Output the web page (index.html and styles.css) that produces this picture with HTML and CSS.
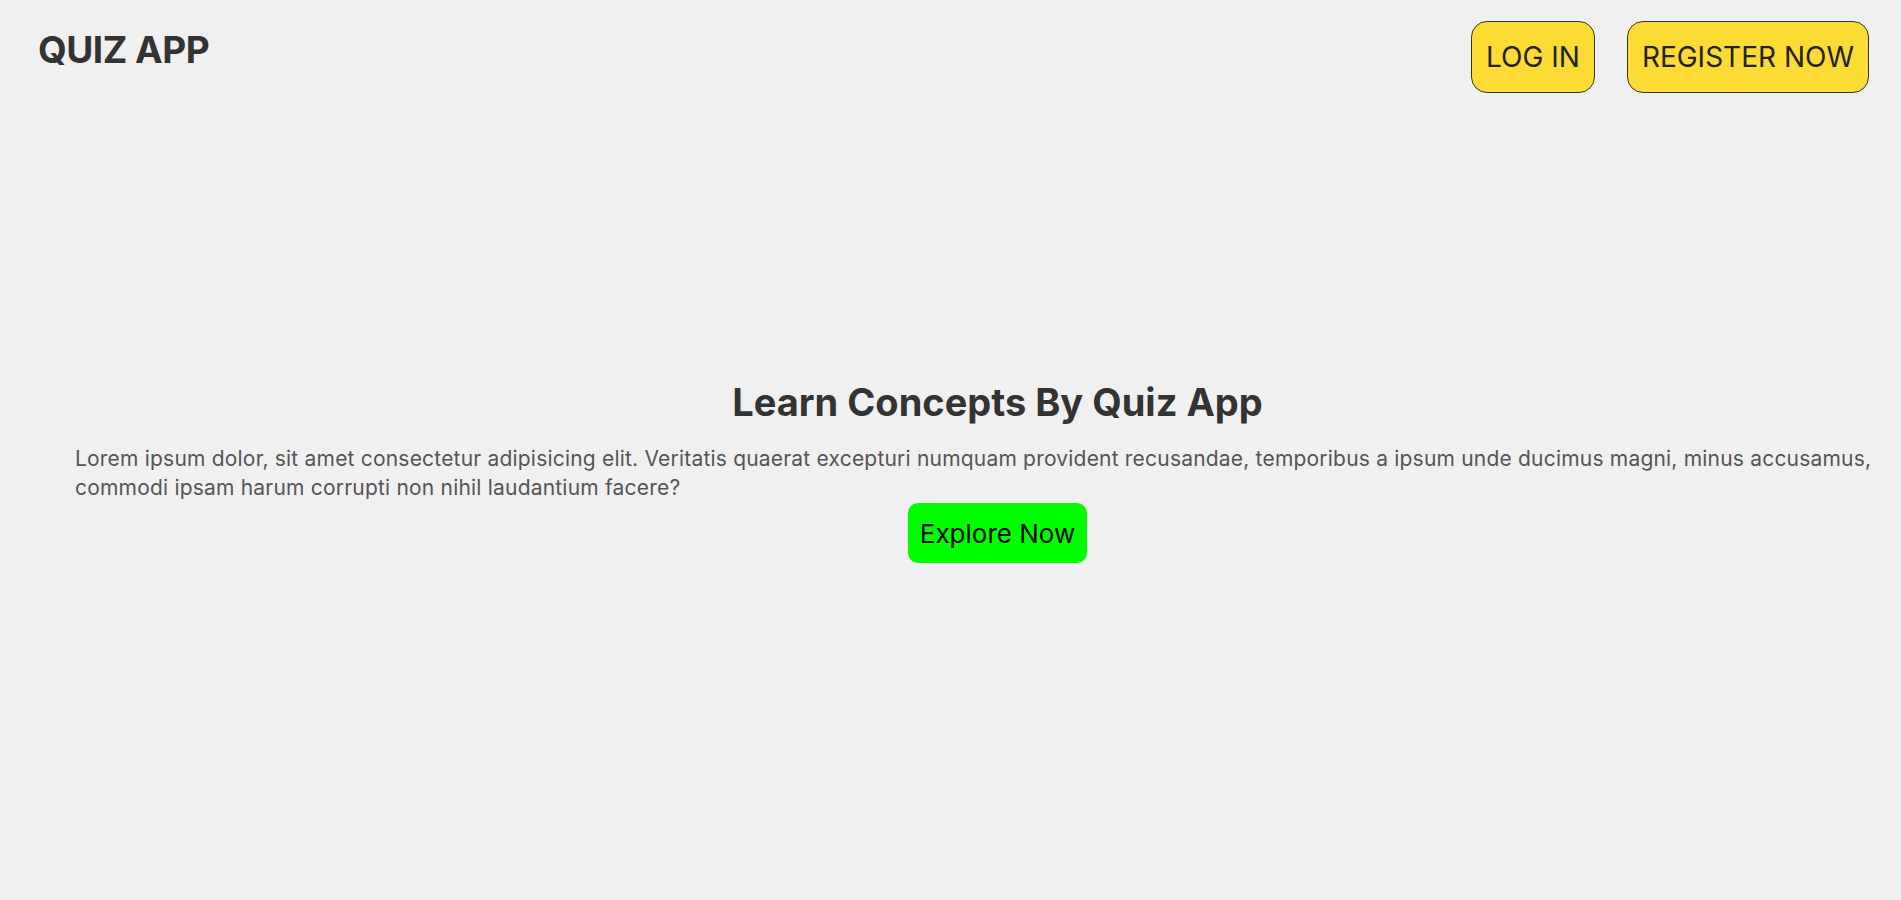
FILE: index.html
```html
<!DOCTYPE html>
<html lang="en">
<head>
<meta charset="utf-8">
<title>Quiz App</title>
<link rel="stylesheet" href="styles.css">
</head>
<body>
<header class="header">
  <h1 class="logo">QUIZ APP</h1>
  <nav class="nav">
    <button class="btn">LOG IN</button>
    <button class="btn">REGISTER NOW</button>
  </nav>
</header>
<main class="hero">
  <h2 class="hero-title">Learn Concepts By Quiz App</h2>
  <p class="hero-text">Lorem ipsum dolor, sit amet consectetur adipisicing elit. Veritatis quaerat excepturi numquam provident recusandae, temporibus a ipsum unde ducimus magni, minus accusamus, commodi ipsam harum corrupti non nihil laudantium facere?</p>
  <button class="explore">Explore Now</button>
</main>
</body>
</html>
```

FILE: styles.css
```css
* { box-sizing: border-box; }
body {
  margin: 0;
  overflow-x: hidden;
  background: #f0f0f0;
  font-family: Inter, "Noto Sans", sans-serif;
  color: #333;
}
.header {
  display: flex;
  justify-content: space-between;
  align-items: flex-start;
  padding: 21px 32px 0 38px;
}
.logo {
  margin: 10px 0 0;
  font-size: 37px;
  font-weight: 700;
  letter-spacing: -0.5px;
  line-height: 1;
  color: #333;
}
.nav {
  display: flex;
  gap: 32px;
}
.btn {
  height: 72px;
  padding: 0 14px;
  font-family: inherit;
  font-size: 28px;
  color: #222;
  background: #fddb35;
  border: 1px solid #333;
  border-radius: 16px;
}
.hero {
  display: flex;
  flex-direction: column;
  align-items: center;
  margin-right: -19px;
  padding: 281px 0 0 75px;
}
.hero-title {
  margin: 0;
  font-size: 38px;
  font-weight: 700;
  line-height: 1.5;
}
.hero-text {
  margin: 13px 0 0;
  align-self: stretch;
  font-size: 21px;
  letter-spacing: 0.2px;
  line-height: 29px;
  color: #555;
}
.explore {
  margin: 1px 0 0;
  height: 60px;
  padding: 0 12px;
  font-family: inherit;
  font-size: 26px;
  color: #000;
  background: #00ff00;
  border: none;
  border-radius: 10px;
}
```
